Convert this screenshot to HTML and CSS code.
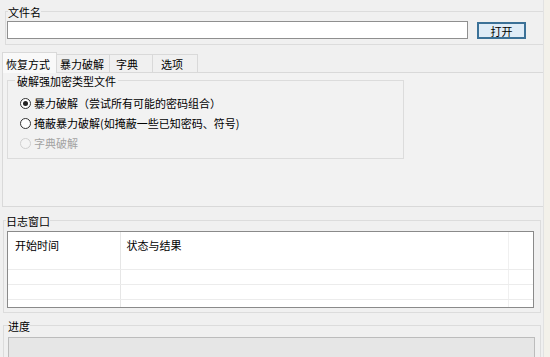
FILE: index.html
```html
<!DOCTYPE html>
<html lang="zh-CN">
<head>
  <meta charset="UTF-8">
  <title>密码恢复</title>
  <link rel="stylesheet" href="styles.css">
</head>
<body>
  <div class="window">

    <!-- 文件名 -->
    <div class="group file-group">
      <div class="group-title">文件名</div>
      <div class="file-row">
        <input class="file-input" type="text">
        <button class="button">打开</button>
      </div>
    </div>

    <!-- 选项卡 -->
    <div class="tabs">
      <div class="tab active">恢复方式</div>
      <div class="tab">暴力破解</div>
      <div class="tab tab-short">字典</div>
      <div class="tab tab-short">选项</div>
    </div>
    <div class="tab-panel">
      <div class="group mode-group">
        <div class="group-title">破解强加密类型文件</div>
        <label class="radio-row"><span class="radio checked"></span>暴力破解（尝试所有可能的密码组合）</label>
        <label class="radio-row"><span class="radio"></span>掩蔽暴力破解(如掩蔽一些已知密码、符号)</label>
        <label class="radio-row disabled"><span class="radio"></span>字典破解</label>
      </div>
    </div>

    <!-- 日志窗口 -->
    <div class="group log-group">
      <div class="group-title">日志窗口</div>
      <div class="list-view">
        <table>
          <tr class="head">
            <td class="col-time">开始时间</td>
            <td class="col-state">状态与结果</td>
            <td></td>
          </tr>
          <tr><td class="col-time"></td><td class="col-state"></td><td></td></tr>
          <tr><td class="col-time"></td><td class="col-state"></td><td></td></tr>
          <tr><td class="col-time"></td><td class="col-state"></td><td></td></tr>
        </table>
      </div>
    </div>

    <!-- 进度 -->
    <div class="group progress-group">
      <div class="group-title">进度</div>
      <div class="progress"></div>
    </div>

  </div>
</body>
</html>
```

FILE: styles.css
```css
* {
  margin: 0;
  padding: 0;
  box-sizing: border-box;
}
body {
  font-family: "Noto Sans CJK SC", "Noto Sans", sans-serif;
  font-size: 11px;
  line-height: 12px;
  color: #000;
  background: #f3f1ea;
  overflow: hidden;
}

/* Окно */
.window {
  width: 544px;
  height: 357px;
  background: #f0f0f0;
  border-right: 1px solid #e2e2e2;
  overflow: hidden;
}

/* Рамки групп */
.group {
  border: 1px solid #dcdcdc;
}
.group-title {
  width: fit-content;
  margin-top: -6px;
  background: #f0f0f0;
  line-height: 12px;
}

/* 文件名 */
.file-group {
  margin: 11px 0 0 5px;
  width: 539px;
  padding: 0 0 5px 1px;
}
.file-group .group-title {
  margin-left: 1px;
}
.file-row {
  display: flex;
  align-items: flex-start;
  gap: 9px;
  margin-top: 3px;
}
.file-input {
  width: 461px;
  height: 18px;
  border: 1px solid #8f8f8f;
  background: #fff;
  outline: none;
}
.button {
  width: 49px;
  height: 17px;
  margin-top: 1px;
  border: 2px solid #3b7197;
  background: #dfecf7;
  font-family: inherit;
  font-size: 11px;
  line-height: 12px;
  color: #000;
}

/* 选项卡 */
.tabs {
  display: flex;
  align-items: flex-end;
  height: 20px;
  margin: 7px 0 0 2px;
}
.tab {
  width: 53px;
  height: 18px;
  border: 1px solid #d9d9d9;
  border-bottom: none;
  border-left: none;
  padding: 3px 0 0 3px;
  background: #f0f0f0;
}
.tab.active {
  width: 55px;
  height: 21px;
  padding: 5px 0 0 3px;
  border-left: 1px solid #d9d9d9;
  background: #f9f9f9;
  position: relative;
  top: 1px;
  z-index: 1;
}
.tab-short {
  width: 43px;
  padding-left: 6px;
}
.tab-short + .tab-short {
  width: 45px;
  padding-left: 8px;
}
.tab-panel {
  width: 542px;
  height: 135px;
  margin-left: 2px;
  border: 1px solid #d9d9d9;
  background: #f2f2f2;
  padding: 7px 0 0 4px;
}

/* 破解强加密类型文件 */
.mode-group {
  width: 397px;
  padding: 0 0 5px 12px;
  background: #f2f2f2;
}
.mode-group .group-title {
  margin-left: -5px;
  background: #f2f2f2;
  padding: 0 2px;
  margin-bottom: 6px;
}
.radio-row {
  display: flex;
  align-items: center;
  gap: 3px;
  height: 20px;
}
.radio-row.disabled {
  color: #a3a3a3;
}
.radio {
  width: 11px;
  height: 11px;
  border: 1px solid #333;
  border-radius: 50%;
  background: #fff;
  display: flex;
  align-items: center;
  justify-content: center;
}
.radio.checked::after {
  content: "";
  width: 5px;
  height: 5px;
  border-radius: 50%;
  background: #222;
}
.radio-row.disabled .radio {
  border-color: #cfcfcf;
  background: #f4f4f4;
}

/* 日志窗口 */
.log-group {
  width: 538px;
  margin: 13px 0 0 3px;
  padding: 0 0 4px 3px;
}
.log-group .group-title {
  margin-bottom: 4px;
  margin-left: -1px;
}
.list-view {
  width: 527px;
  height: 77px;
  border: 1px solid #8a8a8a;
  background: #fff;
  overflow: hidden;
}
.list-view table {
  width: 100%;
  border-collapse: collapse;
}
.list-view tr {
  height: 15px;
}
.list-view td {
  border-bottom: 1px solid #ececec;
  padding: 0;
  vertical-align: top;
}
.list-view .head {
  height: 37px;
}
.list-view .head td {
  padding-top: 7px;
  line-height: 13px;
}
.col-time {
  width: 112px;
  padding-left: 7px !important;
  border-right: 1px solid #e6e6e6;
}
.col-state {
  width: 388px;
  padding-left: 6px !important;
  border-right: 1px solid #f0f0f0;
}

/* 进度 */
.progress-group {
  width: 538px;
  margin: 12px 0 0 3px;
  padding: 0 0 0 4px;
  border-bottom: none;
}
.progress-group .group-title {
  margin-bottom: 5px;
}
.progress {
  width: 527px;
  height: 22px;
  border: 1px solid #bcbcbc;
  background: #e6e6e6;
}
```
